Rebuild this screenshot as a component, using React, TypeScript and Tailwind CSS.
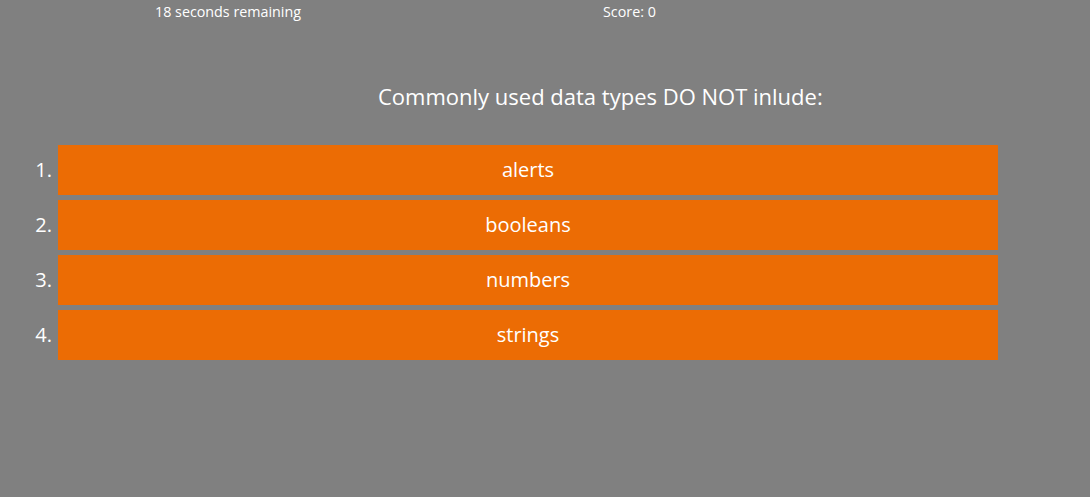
const answers = ['alerts', 'booleans', 'numbers', 'strings'];

const font = { fontFamily: '"Comic Sans MS", "Open Sans", sans-serif' };

export default function App() {
  return (
    <div className="min-h-[497px] w-full bg-[#808080] text-white" style={font}>
      <header className="flex h-[24px] items-center text-[14.3px] leading-none">
        <span className="w-[448px] pl-[155px]">18 seconds remaining</span>
        <span className="pl-[155px]">Score: 0</span>
      </header>

      <h1 className="mt-[58px] pl-[378px] text-[22px] leading-[28px]">
        Commonly used data types DO NOT inlude:
      </h1>

      <ol className="mt-[35px] flex flex-col gap-[5px]">
        {answers.map((a, i) => (
          <li key={a} className="flex items-center">
            <span className="w-[58px] pr-[6px] text-right text-[20px]">{i + 1}.</span>
            <button className="h-[50px] w-[940px] bg-[#ec6c04] text-[20px] text-white">
              {a}
            </button>
          </li>
        ))}
      </ol>
    </div>
  );
}
